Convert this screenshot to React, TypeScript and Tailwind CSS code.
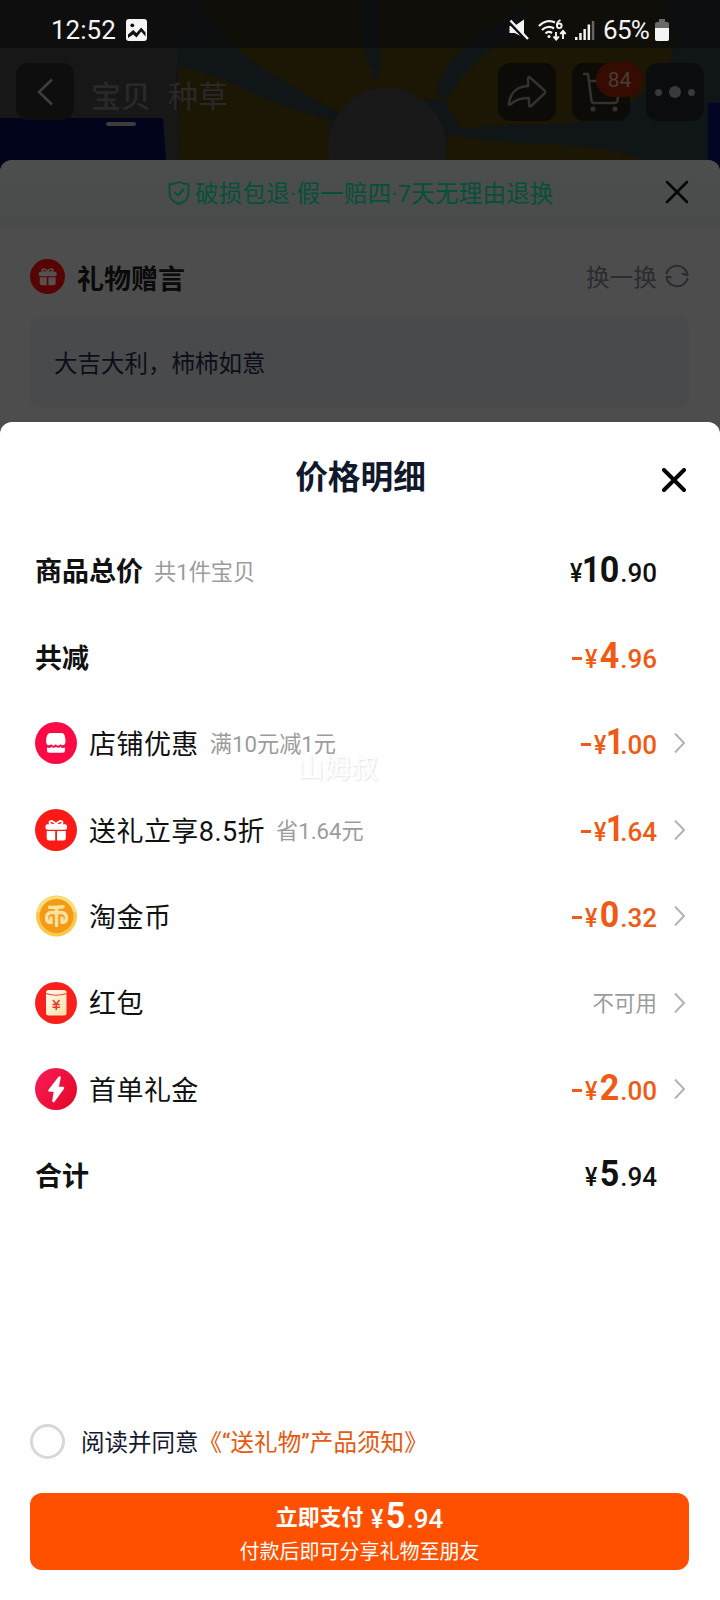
import React from 'react';

type RowProps = {
  icon?: React.ReactNode;
  label: string;
  note?: string;
  bold?: boolean;
  arrow?: boolean;
  children: React.ReactNode;
};

type PriceProps = {
  whole: string;
  cents: string;
  minus?: boolean;
};

const CloseIcon = ({ width }: { width: number }) => (
  <svg className="w-6 h-6 shrink-0" viewBox="0 0 24 24" fill="none" stroke="#050505" strokeWidth={width} strokeLinecap="round">
    <path d="M2 2l20 20M22 2L2 22" />
  </svg>
);

const GiftIcon = ({ className, bg, fg }: { className: string; bg: string; fg: string }) => (
  <svg className={className} viewBox="0 0 42 42">
    <circle cx="21" cy="21" r="21" fill={bg} />
    <path d="M21 15.500c-2-4-6.500-4.500-6.500-1.800 0 2 3 2.300 6.500 2.300 3.500 0 6.500-.3 6.500-2.300 0-2.700-4.500-2.200-6.500 1.800z" fill="none" stroke={fg} strokeWidth="1.900" />
    <rect x="10.500" y="15.300" width="21.500" height="5.400" rx="2" fill={fg} />
    <path d="M11.700 22h8.500v9.500h-6a2.500 2.500 0 0 1-2.500-2.500zM22 22h8.800v7a2.500 2.500 0 0 1-2.500 2.500H22z" fill={fg} />
  </svg>
);

const ShopIcon = () => (
  <svg className="w-[42px] h-[42px]" viewBox="0 0 42 42">
    <circle cx="21" cy="21" r="21" fill="#fb0a46" />
    <path d="M15.500 11h11c2.500 0 4 2.500 4 8.500 0 4.500-4 4.500-5 2.500-1 2-4 2-4.700 0-.9 2-3.700 2-4.700 0-1 2-5 2-5-2.500 0-6 1.900-8.500 4.400-8.500z" fill="#fff" />
    <path d="M12 25.500c2 .8 3.500.4 4.500-.8 1.500 1.500 3.500 1.500 4.500 0 1.300 1.500 3.200 1.500 4.500 0 1 1.200 2.500 1.600 4.500.8v3a2.300 2.300 0 0 1-2.300 2.300H14.300a2.300 2.300 0 0 1-2.300-2.300z" fill="#fff" />
  </svg>
);

const CoinIcon = () => (
  <svg className="w-[42px] h-[42px]" viewBox="0 0 42 42">
    <circle cx="21.500" cy="21" r="20.500" fill="#fbc94a" />
    <path d="M1.500 17a20.500 20.500 0 0 1 40 0z" fill="#fddd77" />
    <circle cx="21.500" cy="21" r="17" fill="#f59a16" />
    <g fill="none" stroke="#fde2a0" strokeWidth="3.400" strokeLinecap="round" strokeLinejoin="round">
      <path d="M14.500 12.300c5 .3 9 0 13.500-.6" />
      <path d="M21.500 13V30.500" />
      <path d="M16 27.500c-3 0-4.500-1.500-4.500-4.700s2-5.300 5-5.300h10c3 0 5 2.100 5 5.300s-1.500 4.700-4.500 4.700v-4.500" />
      <path d="M16 27.500v-4.500" />
    </g>
  </svg>
);

const RedPacketIcon = () => (
  <svg className="w-[42px] h-[42px]" viewBox="0 0 42 42">
    <defs>
      <linearGradient id="packet" x1="0" y1="0" x2="1" y2="1">
        <stop offset="0" stopColor="#fffaf0" />
        <stop offset="1" stopColor="#fde0a4" />
      </linearGradient>
    </defs>
    <circle cx="21" cy="21" r="21" fill="#f9201c" />
    <rect x="11" y="8" width="20.500" height="25.500" rx="2.500" fill="url(#packet)" />
    <path d="M11 11.500q10 3.500 20.500 0" fill="none" stroke="#e8483a" strokeWidth="1.200" />
    <path d="M18 18l3.200 4.300L24.400 18M17.500 22.500h7.400M17.500 25.200h7.400M21.200 22.300v5.700" fill="none" stroke="#e8352a" strokeWidth="1.500" />
  </svg>
);

const BoltIcon = () => (
  <svg className="w-[42px] h-[42px]" viewBox="0 0 42 42">
    <defs>
      <linearGradient id="bolt" x1="0" y1="0" x2="1" y2="0.600">
        <stop offset="0" stopColor="#fa1c58" />
        <stop offset="1" stopColor="#e60a2c" />
      </linearGradient>
    </defs>
    <circle cx="21" cy="21" r="21" fill="url(#bolt)" />
    <path d="M24.500 9.500L14.500 22.500h5.700L18.500 33 28 20h-5.700z" fill="#fff" stroke="#fff" strokeWidth="2.600" strokeLinejoin="round" />
  </svg>
);

// The numeral "1" is much narrower than the rest, so it gets its own cell width
const digitCell = (whole: string, i: number) => {
  if (whole[i] !== '1') return 'flex w-[20px] justify-center';
  return i < whole.length - 1 ? 'flex w-[15px]' : 'flex w-[11px]';
};

const Price = ({ whole, cents, minus }: PriceProps) => (
  <span className="flex -translate-y-[2px] items-baseline leading-none font-['Roboto',sans-serif]">
    {minus && <span className="mr-[3px] h-[3px] w-[10px] -translate-y-[8px] bg-current" />}
    <span className="w-[14px] text-[25px] font-medium"><span className="inline-block origin-left scale-x-[0.93]">¥</span></span>
    <span className="flex text-[37px] font-bold">
      {whole.split('').map((digit, i) => (
        <span key={i} className={digitCell(whole, i)}>
          <span className={digit === '1' ? '-ml-[2px] inline-block origin-left scale-x-[0.85]' : 'inline-block scale-x-[0.92]'}>{digit}</span>
        </span>
      ))}
    </span>
    <span className="ml-px text-[26px] font-medium">.{cents}</span>
  </span>
);

const Row = ({ icon, label, note, bold, arrow, children }: RowProps) => (
  <div className="flex h-[86.400px] items-center">
    {icon && <div className="-mt-px mr-3 w-[42px] shrink-0">{icon}</div>}
    <span className={bold ? 'mt-[3px] text-[27px] font-bold' : 'mt-[3px] text-[27px] tracking-[0.450px]'}>{label}</span>
    {note && <span className="ml-[11px] mt-0.5 text-[22.200px] text-[#9c9c9c]">{note}</span>}
    <div className={arrow ? 'ml-auto mr-[17px] text-[#f05a14]' : 'ml-auto mr-7'}>{children}</div>
    {arrow && (
      <svg className="-mt-px h-5 w-[11px]" viewBox="0 0 11 20" fill="none" stroke="#b4b4b4" strokeWidth="2">
        <path d="M1 .5l9 9.500-9 9.500" />
      </svg>
    )}
  </div>
);

const HeroArt = () => (
  <svg className="absolute inset-0 h-[175px] w-[720px]" viewBox="0 0 720 175">
    <rect width="720" height="175" fill="#171717" />
    <path d="M188 0h532v175H180l-4-105z" fill="#101518" />
    <path d="M0 118h163l4 57H0z" fill="#01041a" />
    <path d="M178 67c30 6 45 12 62 20 30 14 58 26 91 32l-2 56H180z" fill="#1c1604" />
    <path d="M202 0h160c-2 28 2 55 12 79 6-1 6-8 6-20V0h154c-40 28-80 40-98 90 2 8 6 4 10 8l-100 10-6 6C290 84 212 48 202 0z" fill="#1c1604" />
    <path d="M534 0h130c12 20 14 40 8 56-18 36-50 62-106 68-35 0-60 1-106 4-4-8-9-16-15-24 10-26 45-60 69-64z" fill="#1c1604" />
    <path d="M448 134c70 16 150 4 192 25v16H440z" fill="#1c1604" />
    <circle cx="387" cy="147" r="59" fill="#1a191a" />
    <path d="M708 103h12v72h-12z" fill="#020524" />
  </svg>
);

const StatusBar = () => (
  <div className="relative flex h-12 items-center bg-[#0c0c0b]/70 pt-[11px] pl-[51px] pr-[51px] text-[26px] text-[#f4f4f4] font-['Roboto',sans-serif]">
    <span className="mt-px w-[75px]">12:52</span>
    <svg className="h-[22px] w-[21px]" viewBox="0 0 21 22">
      <rect width="21" height="22" rx="3" fill="#f4f4f4" />
      <circle cx="6.300" cy="6.300" r="1.900" fill="#111" />
      <path d="M2 15.500l5.200-4.500 3.300 3 4.700-5.500 4.300 5v4l-4.300-5-4.700 6-3.300-3L2 19z" fill="#111" />
    </svg>
    <svg className="ml-auto h-[22px] w-5" viewBox="0 0 20 22" fill="#f4f4f4">
      <path d="M.5 7h5L15 .5v18L5.500 14h-5z" />
      <path d="M.5 3.500L18 21.500" stroke="#0e0e0c" strokeWidth="3" />
      <path d="M1.500 1.500L19 20" stroke="#f4f4f4" strokeWidth="2.400" />
    </svg>
    <svg className="ml-[9px] h-[22px] w-[29px]" viewBox="0 0 29 22" fill="none" stroke="#f4f4f4" strokeWidth="2.200">
      <path d="M1 7c5-5.500 11.500-6 16-3.500M4 11c3.500-3.500 8.500-4 12-1.500M7.500 14.500c2-2 4.500-2 6.500-.5" />
      <circle cx="11" cy="17.500" r="1.500" fill="#f4f4f4" stroke="none" />
      <path d="M22.500 1c-3 1.500-3.800 4-3.500 6M18 13v7M15.500 17.500l2.700 3 2.700-3M25 20v-7.500M22.300 15l2.700-3 2.700 3" strokeWidth="1.900" />
      <circle cx="21.300" cy="6.800" r="2.300" strokeWidth="1.900" />
    </svg>
    <svg className="ml-[8px] h-[22px] w-5" viewBox="0 0 20 22" fill="#f4f4f4">
      <rect y="18" width="2.500" height="3" />
      <rect x="4.200" y="14" width="2.500" height="7" />
      <rect x="8.400" y="10" width="2.500" height="11" />
      <rect x="12.600" y="5.500" width="2.500" height="15.500" />
      <rect x="16.800" y="2" width="2.500" height="19" fill="#666" />
    </svg>
    <span className="ml-[8px] mt-px w-[52px] whitespace-nowrap tracking-[-0.700px]">65%</span>
    <svg className="h-[22px] w-[14px]" viewBox="0 0 14 22">
      <path d="M4 0h6v3h2a2 2 0 0 1 2 2v15a2 2 0 0 1-2 2H2a2 2 0 0 1-2-2V5a2 2 0 0 1 2-2h2z" fill="#6a6a6a" />
      <path d="M0 9h14v11a2 2 0 0 1-2 2H2a2 2 0 0 1-2-2z" fill="#f4f4f4" />
    </svg>
  </div>
);

const TopNav = () => (
  <div className="relative flex h-28 items-start pt-[15px] pl-4 pr-4 text-[#292929]">
    <div className="flex h-[57px] w-[58px] items-center justify-center rounded-xl bg-[#0e0e0e]">
      <svg className="h-7 w-4" viewBox="0 0 16 28" fill="none" stroke="#3f3f3f" strokeWidth="2.500">
        <path d="M15 1.500L2 14l13 12.500" />
      </svg>
    </div>
    <div className="ml-[17px] mt-[12px] flex gap-[17px] text-[30px] leading-[44px]">
      <div className="flex flex-col items-center">
        <span className="font-medium">宝贝</span>
        <span className="mt-[3px] h-1 w-[30px] rounded-full bg-[#3c3c3c]" />
      </div>
      <span>种草</span>
    </div>
    <div className="ml-auto flex gap-4">
      <div className="flex h-[58px] w-[58px] items-center justify-center rounded-xl bg-[#0d0b07]">
        <svg className="h-[34px] w-10" viewBox="0 0 40 34" fill="none" stroke="#333230" strokeWidth="2.500" strokeLinejoin="round">
          <path d="M21 3.500c0-1.500 1-2 2-1L37.500 15.500c1 1 1 2 0 3L24 31c-1 .8-2 .4-2-1v-7c-8-.5-14 2-18.500 6.500C1.500 30.500 2 29 2 28 3.500 18 10 11.500 21 11z" />
        </svg>
      </div>
      <div className="relative flex h-[58px] w-[58px] items-center justify-center rounded-xl bg-[#0d0b07]">
        <svg className="h-[40px] w-[38px]" viewBox="0 0 38 40" fill="none" stroke="#333230" strokeWidth="2.500">
          <path d="M1 2h5l3.500 27c.2 1.500 1 2 2.500 2h20.500c1.500 0 2.500-.8 2.800-2L37 20M7 9h25" />
          <circle cx="11" cy="37" r="2.500" fill="#333230" stroke="none" />
          <circle cx="33" cy="37" r="2.500" fill="#333230" stroke="none" />
        </svg>
        <span className="absolute -top-px -right-[13px] flex h-[35px] w-[47px] items-center justify-center rounded-full bg-[#360b02] pt-[3px] text-[21px] text-[#4b3c38] font-['Roboto',sans-serif]">84</span>
      </div>
      <div className="flex h-[58px] w-[58px] items-center justify-center gap-[7px] rounded-xl bg-[#0a0c0e]">
        <span className="h-[7px] w-[7px] rounded-full bg-[#3a3a3a]" />
        <span className="h-3 w-3 rounded-full bg-[#3a3a3a]" />
        <span className="h-[7px] w-[7px] rounded-full bg-[#3a3a3a]" />
      </div>
    </div>
  </div>
);

const GiftSheet = () => (
  <div className="relative h-[290px] overflow-hidden rounded-t-xl bg-[#4d4d4d]">
    <div className="flex h-[67px] items-center bg-gradient-to-b from-[#4d4e4e] to-[#484c4a] pl-[168px] pr-[31px] text-[#04503a]">
      <svg className="h-6 w-[22px] -mt-0.5" viewBox="0 0 22 24" fill="none" stroke="currentColor" strokeWidth="1.900" strokeLinejoin="round">
        <path d="M11 1c3 1.700 6 2.200 9.500 2.300v9.200c0 5-3.500 8.500-9.500 10.500-6-2-9.500-5.500-9.500-10.500V3.300C5 3.200 8 2.700 11 1z" />
        <path d="M6.500 11l3.500 3.500 6-6.500" />
      </svg>
      <span className="ml-[5px] mt-0.5 text-[23.500px] tracking-[0.250px] leading-none">破损包退·假一赔四·7天无理由退换</span>
      <span className="ml-auto -mt-[3px]"><CloseIcon width={2.500} /></span>
    </div>
    <div className="mt-[29px] flex h-[40px] items-center pl-[30px] pr-[31px]">
      <GiftIcon className="h-[35px] w-[35px]" bg="#560504" fg="#57504f" />
      <span className="ml-3 mt-[9px] text-[27px] font-bold leading-none text-[#0a0a0a]">礼物赠言</span>
      <span className="ml-auto mt-[5px] text-[23.700px] leading-none text-[#2b2b33]">换一换</span>
      <svg className="ml-[8px] h-6 w-6" viewBox="0 0 24 24" fill="none" stroke="#2b2b33" strokeWidth="2">
        <path d="M1.200 10A11 11 0 0 1 22.800 11.500M17 9.500l5.800 2M22.800 14A11 11 0 0 1 1.200 12.500M6.500 13.500l-5.300-1" />
      </svg>
    </div>
    <div className="mx-[30px] mr-[31px] mt-5 flex h-[92px] items-center rounded-xl bg-[#484a4c] px-6 text-[23.500px] text-[#0c0e18]">
      <span className="pt-[6px]">大吉大利，柿柿如意</span>
    </div>
  </div>
);

const PriceSheet = () => (
  <div className="relative -mt-[28px] flex h-[1178px] flex-col rounded-t-xl bg-white px-[30px] text-[#111]">
    <div className="flex h-[106px] items-center">
      <h1 className="flex-1 pl-[29px] pt-[8px] text-center text-[32.700px] font-bold text-[#11182c]">价格明细</h1>
      <span className="mr-1 pt-2.5"><CloseIcon width={3.900} /></span>
    </div>
    <div className="pl-[5px] pr-[5px]">
      <Row label="商品总价" note="共1件宝贝" bold><Price whole="10" cents="90" /></Row>
      <Row label="共减" bold><div className="text-[#f05a14]"><Price whole="4" cents="96" minus /></div></Row>
      <Row icon={<ShopIcon />} label="店铺优惠" note="满10元减1元" arrow><Price whole="1" cents="00" minus /></Row>
      <Row icon={<GiftIcon className="w-[42px] h-[42px]" bg="#fb1a16" fg="#fff" />} label="送礼立享8.5折" note="省1.64元" arrow><Price whole="1" cents="64" minus /></Row>
      <Row icon={<CoinIcon />} label="淘金币" arrow><Price whole="0" cents="32" minus /></Row>
      <Row icon={<RedPacketIcon />} label="红包" arrow><div className="pt-0.5 text-[21.500px] text-[#9c9c9c]">不可用</div></Row>
      <Row icon={<BoltIcon />} label="首单礼金" arrow><Price whole="2" cents="00" minus /></Row>
      <Row label="合计" bold><Price whole="5" cents="94" /></Row>
    </div>

    {/* Agreement */}
    <div className="mt-auto flex items-center text-[23.500px] leading-[35px] text-[#151a30]">
      <span className="mr-4 h-[35px] w-[35px] rounded-full border-[3px] border-[#d8d8d8]" />
      <span className="-mb-[3px]">阅读并同意</span>
      <span className="-mb-[3px] text-[#e8590f] tracking-[0.100px]">《“送礼物”产品须知》</span>
    </div>

    {/* Pay button */}
    <div className="mt-[34px] mb-[30px] flex h-[77px] w-[659px] flex-col items-center rounded-xl bg-[#ff5000] text-white">
      <div className="flex h-[46px] items-center gap-2 pt-[3px]">
        <span className="text-[21.900px] font-bold leading-none">立即支付</span>
        <Price whole="5" cents="94" />
      </div>
      <span className="mt-px text-[20px] leading-6">付款后即可分享礼物至朋友</span>
    </div>

    <span className="absolute left-[297px] top-[327px] text-[27px] text-white [text-shadow:1px_1px_2px_#e2e2e2]">山姆叔</span>
  </div>
);

const App = () => {
  return (
    <div className="relative h-[1600px] w-[720px] overflow-hidden bg-[#171717] font-['Roboto','Noto_Sans_CJK_SC',sans-serif]">
      <HeroArt />
      <StatusBar />
      <TopNav />
      <GiftSheet />
      <PriceSheet />
    </div>
  );
};

export default App;
